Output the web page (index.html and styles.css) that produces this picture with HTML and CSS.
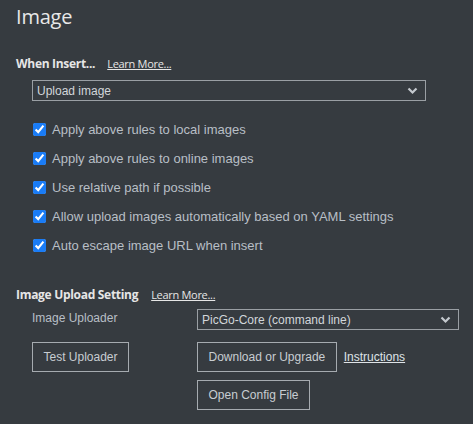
FILE: index.html
```html
<!DOCTYPE html>
<html>
<head>
<meta charset="utf-8">
<link rel="stylesheet" href="styles.css">
</head>
<body>
<div class="page">
  <h1 class="title">Image</h1>

  <div class="section-head">
    <span class="section-label">When Insert...</span>
    <a class="learn">Learn More...</a>
  </div>

  <div class="select wide">
    <span>Upload image</span>
    <svg class="chev" width="11" height="8" viewBox="0 0 11 8"><path d="M1.5 1.5 L5.5 5.5 L9.5 1.5" fill="none" stroke="#c4c9ce" stroke-width="2.2"/></svg>
  </div>

  <div class="checks">
    <label class="check"><input type="checkbox" checked><span>Apply above rules to local images</span></label>
    <label class="check"><input type="checkbox" checked><span>Apply above rules to online images</span></label>
    <label class="check"><input type="checkbox" checked><span>Use relative path if possible</span></label>
    <label class="check"><input type="checkbox" checked><span>Allow upload images automatically based on YAML settings</span></label>
    <label class="check"><input type="checkbox" checked><span>Auto escape image URL when insert</span></label>
  </div>

  <div class="section-head upload-head">
    <span class="section-label">Image Upload Setting</span>
    <a class="learn">Learn More...</a>
  </div>

  <div class="uploader-grid">
    <div class="row-label">Image Uploader</div>
    <div class="select narrow">
      <span>PicGo-Core (command line)</span>
      <svg class="chev" width="11" height="8" viewBox="0 0 11 8"><path d="M1.5 1.5 L5.5 5.5 L9.5 1.5" fill="none" stroke="#c4c9ce" stroke-width="2.2"/></svg>
    </div>
    <div class="cell-btn"><button class="btn">Test Uploader</button></div>
    <div class="cell-btn btn-row">
      <button class="btn">Download or Upgrade</button>
      <a class="instr">Instructions</a>
    </div>
    <div></div>
    <div class="cell-btn second">
      <button class="btn">Open Config File</button>
    </div>
  </div>
</div>
</body>
</html>
```

FILE: styles.css
```css
html, body {
  margin: 0;
  padding: 0;
  background: #363b40;
}
body {
  width: 473px;
  height: 424px;
  overflow: hidden;
  font-family: "Liberation Sans", Arial, sans-serif;
  color: #b8bfc6;
}
.page {
  padding: 0 0 0 16px;
}
.title {
  margin: 0;
  padding-top: 3px;
  font-family: "Open Sans", "Noto Sans", sans-serif;
  font-weight: 400;
  font-size: 20px;
  line-height: 28px;
  color: #e8e8e8;
  letter-spacing: -0.2px;
}
.section-head {
  display: flex;
  align-items: baseline;
  margin-top: 24px;
  height: 18px;
}
.section-label {
  font-family: "Open Sans", "Noto Sans", sans-serif;
  font-weight: 700;
  font-size: 12px;
  color: #e6e6e6;
  letter-spacing: -0.3px;
}
.learn {
  font-family: "Open Sans", "Noto Sans", sans-serif;
  font-size: 11px;
  color: #e6e6e6;
  text-decoration: underline;
  margin-left: 12px;
  letter-spacing: -0.3px;
}
.select {
  box-sizing: border-box;
  display: flex;
  align-items: center;
  justify-content: space-between;
  height: 21px;
  border: 1px solid #9a9fa4;
  font-size: 12px;
  color: #d2d6da;
  padding: 0 7px 0 4px;
}
.select.wide {
  margin-left: 16px;
  margin-top: 7px;
  width: 394px;
}
.select.narrow {
  width: 262px;
}
.chev {
  display: block;
}
.checks {
  margin-top: 21px;
  margin-left: 17px;
  display: flex;
  flex-direction: column;
  gap: 14px;
}
.check {
  display: flex;
  align-items: center;
  height: 15px;
  font-size: 13px;
  color: #b8bfc6;
}
.check input {
  margin: 0 6px 0 0;
  width: 13px;
  height: 13px;
  accent-color: #1a7cf6;
}
.upload-head {
  margin-top: 33px;
}
.upload-head .learn {
  margin-left: 13px;
}
.uploader-grid {
  display: grid;
  grid-template-columns: 165px auto;
  margin-left: 16px;
  margin-top: 5px;
  justify-content: start;
}
.row-label {
  font-size: 12px;
  height: 21px;
  line-height: 19px;
  color: #b8bfc6;
}
.cell-btn {
  margin-top: 12px;
  display: flex;
  align-items: center;
}
.cell-btn.second {
  margin-top: 8px;
}
.btn {
  box-sizing: border-box;
  height: 30px;
  background: transparent;
  border: 1px solid #a6abb0;
  font-family: "Liberation Sans", Arial, sans-serif;
  font-size: 12px;
  color: #c8cdd2;
  padding: 0 10.5px;
  white-space: nowrap;
}
.instr {
  margin-left: 7px;
  font-size: 12px;
  color: #dfe3e7;
  text-decoration: underline;
}
```
